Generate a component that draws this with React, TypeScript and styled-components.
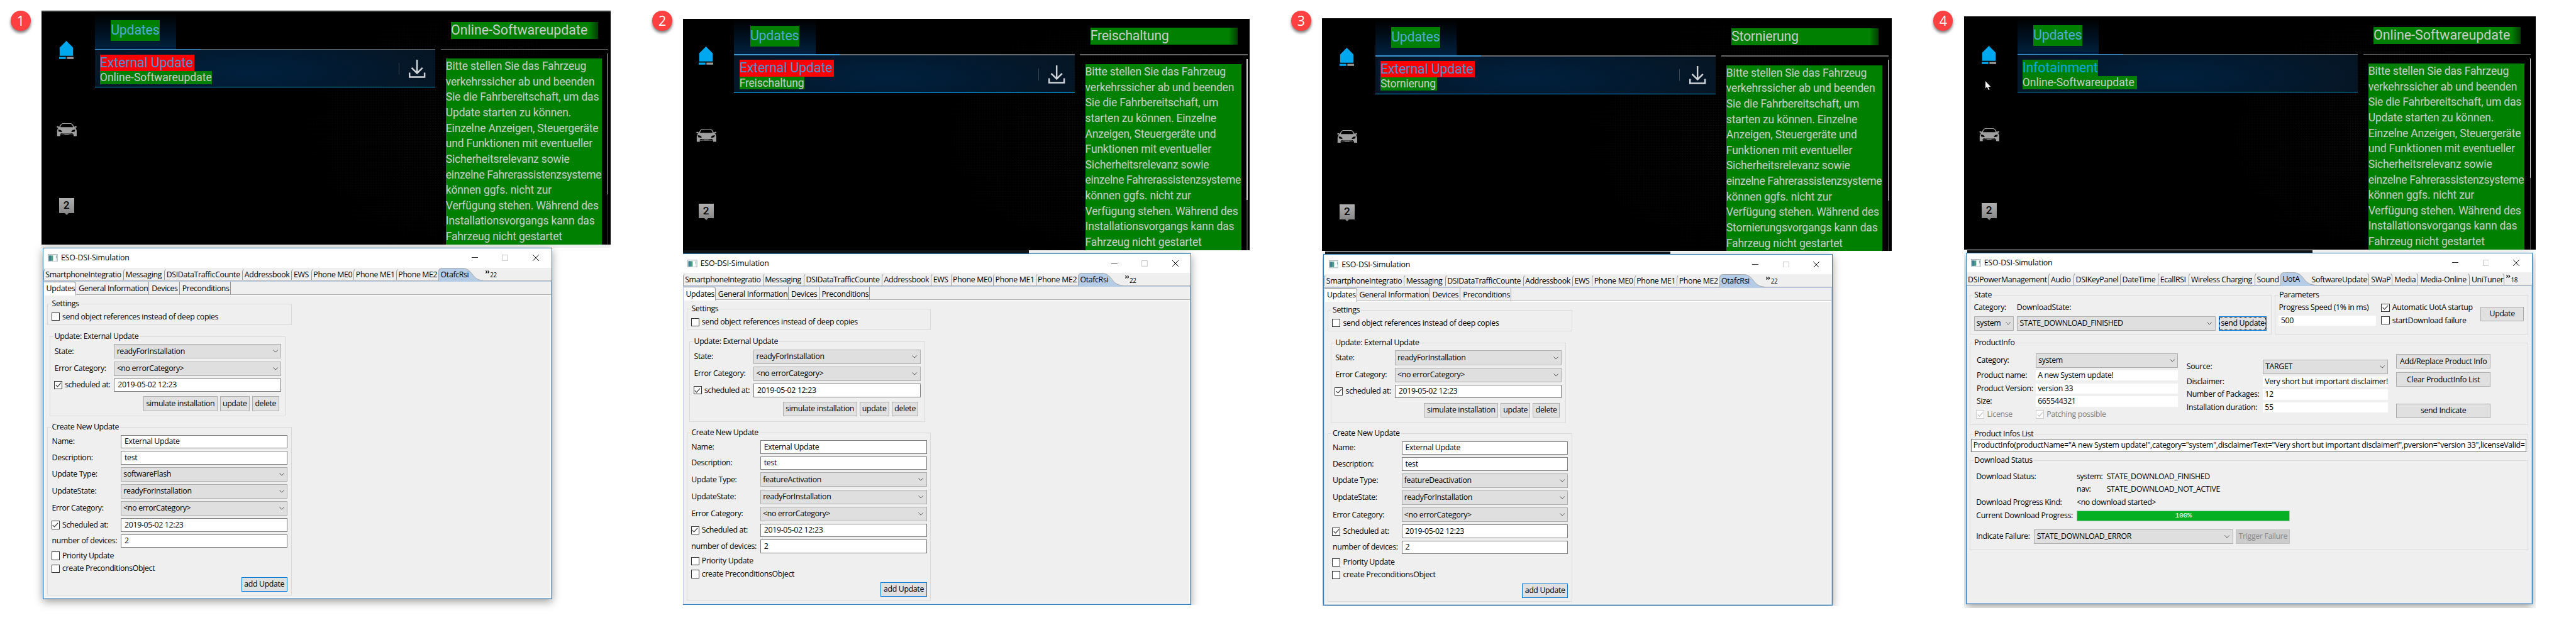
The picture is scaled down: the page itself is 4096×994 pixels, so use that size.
import React from 'react';
import styled, { createGlobalStyle, css } from 'styled-components';

const GlobalStyle = createGlobalStyle`
  html, body { margin: 0; padding: 0; background: #fff; overflow: hidden; }
  * { box-sizing: border-box; }
`;

const uiFont = `'Open Sans', 'Noto Sans', sans-serif`;
const carFont = `Roboto, 'Liberation Sans', sans-serif`;

/* ---------- page ---------- */

const Page = styled.main`
  zoom: 0.82332;
  display: flex;
  align-items: flex-start;
  gap: 81px;
  width: 4975px;
  height: 1206px;
  padding-left: 21px;
  background: #fff;
  overflow: hidden;
`;

const Column = styled.section`
  display: flex;
  align-items: flex-start;
  gap: 21px;
  flex: none;
`;

const Badge = styled.div`
  display: flex;
  align-items: center;
  justify-content: center;
  width: 38px;
  height: 38px;
  margin-top: 21px;
  border-radius: 50%;
  background: #ff4040;
  color: #fff;
  font: 400 26px/38px ${uiFont};
  box-shadow: 0 4px 5px rgba(0, 0, 0, 0.5);
`;

const Capture = styled.div<{ $top: number; $w: number; $h: number; $ruled?: boolean }>`
  width: ${p => p.$w}px;
  height: ${p => p.$h}px;
  margin-top: ${p => p.$top}px;
  overflow: ${p => (p.$ruled ? 'visible' : 'hidden')};
  ${p => p.$ruled && css`border-top: 1px solid #a9b0b0; padding-top: 1px;`}
`;

/* ---------- infotainment screen ---------- */

const Screen = styled.div<{ $h: number; $crop: number }>`
  height: ${p => p.$h}px;
  background: #000;
  overflow: hidden;
  position: relative;
  z-index: 1;
  & > div { margin: ${p => -p.$crop}px 0 0 ${p => -p.$crop}px; }
`;

const ScreenGrid = styled.div`
  position: relative;
  display: grid;
  grid-template-columns: 103px 658px 324px;
  column-gap: 0;
  width: 1110px;
  height: 450px;
  color: #c8ccc8;
  font-family: ${carFont};
`;

const Dots = styled.div`
  position: absolute;
  inset: 0;
  background-image: radial-gradient(circle, #2a2a2a 0.8px, transparent 1.1px);
  background-size: 5px 5px;
  mask-image: radial-gradient(ellipse 340px 260px at 800px 230px, rgba(0,0,0,.7), transparent);
`;

const SideBar = styled.nav`
  position: relative;
  display: flex;
  flex-direction: column;
  align-items: center;
  width: 97px;
  padding-top: 57px;
`;

const CarSlot = styled.div` height: 25px; margin: 124px 0 119px; svg { display: block; } `;

const Bubble = styled.div`
  position: relative;
  width: 29px;
  height: 29px;
  background: linear-gradient(#b0b0b0, #888);
  color: #000;
  font: 500 21px/29px ${carFont};
  text-align: center;
  &::after {
    content: '';
    position: absolute;
    left: 11px;
    top: 29px;
    border: 4px solid transparent;
    border-top-color: #888;
  }
`;

const Pointer = styled.svg` position: absolute; left: 42px; top: 125px; `;

const MainPane = styled.div` position: relative; `;

const TabArea = styled.div` height: 72px; `;

const ActiveTab = styled.div`
  width: 157px;
  height: 72px;
  padding: 17px 0 0 31px;
  background: linear-gradient(#000 5%, #00213f);
`;

const TabLabel = styled.span`
  display: block;
  width: 95px;
  height: 40px;
  background: #008000;
  color: #4fa8d8;
  font-size: 26px;
  line-height: 39px;
  letter-spacing: -0.28px;
  white-space: nowrap;
`;

const Rule = styled.div<{ $accent?: boolean }>`
  height: 2px;
  background: ${p => (p.$accent ? 'linear-gradient(90deg, #3c96d2 204px, #666a6e 204px)' : '#666')};
`;

const Item = styled.div`
  display: flex;
  align-items: flex-start;
  height: 73px;
  padding: 9px 19px 0 10px;
  border-bottom: 2px solid #00a8f0;
  background: radial-gradient(ellipse 70% 130% at 45% 60%, #00203e, #06131f);
`;

const ItemText = styled.div` flex: 1; `;

const ItemName = styled.div<{ $known?: boolean; $w: number }>`
  width: ${p => p.$w}px;
  height: 32px;
  background: ${p => (p.$known ? '#008000' : '#ff0000')};
  color: ${p => (p.$known ? '#00a8e8' : '#4c8fd0')};
  font-size: 26px;
  line-height: 31px;
  letter-spacing: -0.2px;
  white-space: nowrap;
`;

const ItemKind = styled.div<{ $w: number; $ls: number }>`
  width: ${p => p.$w}px;
  height: 25px;
  background: #008000;
  font-size: 21.3px;
  line-height: 25px;
  letter-spacing: ${p => p.$ls}px;
  white-space: nowrap;
`;

const ItemAction = styled.div`
  display: flex;
  gap: 19px;
  padding-top: 10px;
  &::before { content: ''; width: 1px; height: 23px; margin-top: 6px; background: #3a4550; }
`;

const Detail = styled.div` position: relative; margin-left: 10px; width: 324px; `;

const DetailTitle = styled.div<{ $ls: number }>`
  width: 284px;
  height: 33px;
  margin: 20px 0 19px 20px;
  background: linear-gradient(90deg, #008000 94%, #023c02);
  font-size: 26px;
  line-height: 32px;
  letter-spacing: ${p => p.$ls}px;
  white-space: nowrap;
`;

const DetailBody = styled.div` display: flex; height: 376px; `;

const Notice = styled.div`
  width: 302px;
  margin: 17px 10px 0 10px;
  background: #008000;
  font-size: 21.3px;
  line-height: 29.9px;
  letter-spacing: -0.23px;
  white-space: nowrap;
`;

const NoticeLine = styled.div<{ $tight?: boolean }>`
  ${p => p.$tight && css`letter-spacing: -0.42px;`}
`;

const ScrollTrack = styled.div<{ $thumb: number }>`
  width: 2px;
  margin-top: 7px;
  background: linear-gradient(#d8d8d8 ${p => p.$thumb}px, #444 ${p => p.$thumb}px);
`;

/* ---------- desktop behind the window ---------- */

const Strip = styled.div<{ $x: number; $w: number }>`
  width: ${p => p.$w}px;
  height: 5px;
  margin: 1px 0 0 ${p => p.$x}px;
  background: #14171a;
`;

const StripGap = styled.div` height: 6.5px; background: #f0f0f0; `;

/* ---------- simulator window ---------- */

const Frame = styled.div<{ $x: number; $w: number }>`
  position: relative;
  display: flex;
  flex-direction: column;
  width: ${p => p.$w}px;
  height: 679px;
  margin-left: ${p => p.$x}px;
  border: 1px solid #2a7cba;
  background: #efefef;
  color: #000;
  font: 400 15px/20px ${uiFont};
  letter-spacing: -0.41px;
  white-space: nowrap;
  box-shadow: 0 5px 16px rgba(0, 0, 0, 0.38);
`;

const TitleBar = styled.header`
  display: flex;
  align-items: center;
  height: 37px;
  padding: 0 24px 0 9px;
  background: #fff;
  svg { flex: none; }
`;

const Caption = styled.span` flex: 1; margin-left: 6px; padding-top: 1px; letter-spacing: -0.18px; `;

const Controls = styled.div` display: flex; align-items: center; gap: 47px; svg { display: block; } `;

const TabStrip = styled.div`
  display: flex;
  flex: none;
  height: 27px;
  border-bottom: 2px solid #b5cce6;
  box-shadow: inset 0 -1px 0 #989898;
`;

const OuterTab = styled.div<{ $w: number; $side?: 'left' | 'right' | 'none' }>`
  width: ${p => p.$w}px;
  height: 24px;
  flex: none;
  padding-left: ${p => (p.$side === 'right' ? 4 : 3)}px;
  padding-top: 3px;
  border-top: 1px solid transparent;
  ${p => (!p.$side || p.$side === 'left') && css`border-left: 1px solid #989898; border-top-left-radius: 8px;`}
  ${p => p.$side === 'right' && css`border-right: 1px solid #989898; border-top-right-radius: 8px;`}
`;

const Selected = styled.div<{ $w: number }>`
  position: relative;
  width: ${p => p.$w}px;
  flex: none;
  padding: 4px 0 0 4px;
  svg { position: absolute; left: 0; top: 0; }
  span { position: relative; }
`;

const More = styled.div`
  display: flex;
  margin-left: 4px;
  small { font-size: 12px; line-height: 14px; margin: 8px 0 0 1px; }
  svg { margin-top: 5px; }
`;

const Client = styled.div`
  display: flex;
  flex-direction: column;
  flex: 1;
  border: solid #b5cce6;
  border-width: 0 2px 2px;
`;

const InnerTabs = styled.div`
  display: flex;
  height: 27px;
  flex: none;
  border-bottom: 2px solid #fff;
  box-shadow: inset 0 -1px 0 #989898;
`;

const InnerTab = styled.div<{ $w: number; $on?: boolean }>`
  width: ${p => p.$w}px;
  height: ${p => (p.$on ? 27 : 24)}px;
  padding: 4px 0 0 4.5px;
  border-right: 1px solid #989898;
  ${p => p.$on && css`background: #fff; border-top-right-radius: 5px; border-top: 1px solid #989898; padding-top: 3px;`}
`;

const Sheet = styled.div`
  flex: 1;
  padding: 15.8px 0 0 5px;
  border: solid #fff;
  border-width: 0 2px 2px;
`;

const Group = styled.div<{ $w?: number; $h: number; $m?: string; $p?: string }>`
  position: relative;
  width: ${p => (p.$w ? `${p.$w}px` : 'auto')};
  height: ${p => p.$h}px;
  margin: ${p => p.$m ?? '0'};
  padding: ${p => p.$p ?? '0'};
  border: 1px solid #dadada;
`;

const Legend = styled.span`
  position: absolute;
  left: 6px;
  top: -11px;
  padding: 0 2px;
  background: #efefef;
`;

const Form = styled.div<{ $label: number }>`
  display: grid;
  grid-template-columns: ${p => p.$label}px 1fr;
  row-gap: 5px;
  align-items: center;
  & > span { padding-left: 1px; }
`;

const Field = styled.div<{ $w?: number; $flat?: boolean; $ls?: number }>`
  display: flex;
  align-items: center;
  width: ${p => (p.$w ? `${p.$w}px` : 'auto')};
  height: ${p => (p.$flat ? 20 : 26)}px;
  padding-left: ${p => (p.$flat ? 4 : 6)}px;
  border: ${p => (p.$flat ? 'none' : '1px solid #7a7a7a')};
  background: #fff;
  overflow: hidden;
  ${p => p.$ls && css`height: 25px; padding-left: 3px; letter-spacing: ${p.$ls}px;`}
`;

const Combo = styled.div<{ $w?: number }>`
  display: flex;
  align-items: center;
  justify-content: space-between;
  width: ${p => (p.$w ? `${p.$w}px` : 'auto')};
  height: 28px;
  flex: none;
  padding: 0 5px 0 4px;
  border: 1px solid #adadad;
  background: #dfdfdf;
`;

const Button = styled.div<{ $w: number; $look?: 'default' | 'focus' | 'off' }>`
  display: flex;
  align-items: center;
  justify-content: center;
  width: ${p => p.$w}px;
  height: 28px;
  flex: none;
  border: 1px solid #adadad;
  background: #e0e0e0;
  ${p => (p.$look === 'default' || p.$look === 'focus') && css`border: 2px solid #0078d7;`}
  ${p => p.$look === 'focus' && css`outline: 1px dotted #000; outline-offset: -3px;`}
  ${p => p.$look === 'off' && css`border-color: #bfbfbf; background: #ccc; color: #8a8a8a;`}
`;

const CheckRow = styled.div<{ $off?: boolean }>`
  display: flex;
  align-items: center;
  gap: 5px;
  height: 20px;
  color: ${p => (p.$off ? '#7d7d7d' : '#000')};
`;

const Box = styled.span<{ $off?: boolean }>`
  display: flex;
  align-items: center;
  justify-content: center;
  width: 16px;
  height: 16px;
  border: 1px solid ${p => (p.$off ? '#ccc' : '#333')};
  background: #fff;
`;

const Row = styled.div<{ $gap?: number; $m?: string; $end?: boolean }>`
  display: flex;
  align-items: center;
  justify-content: ${p => (p.$end ? 'flex-end' : 'flex-start')};
  gap: ${p => p.$gap ?? 0}px;
  margin: ${p => p.$m ?? '0'};
`;

const Stack = styled.div<{ $gap?: number; $w?: number; $m?: string }>`
  display: flex;
  flex-direction: column;
  gap: ${p => p.$gap ?? 0}px;
  width: ${p => (p.$w ? `${p.$w}px` : 'auto')};
  margin: ${p => p.$m ?? '0'};
  flex: none;
`;

const Cell = styled.span<{ $w: number }>` width: ${p => p.$w}px; flex: none; `;

const UotaBody = styled.div` flex: 1; padding: 16px 5px 0 5px; `;

const TopRow = styled.div` display: flex; gap: 5.5px; `;

const ProductRow = styled.div` display: flex; align-items: flex-start; `;

const Progress = styled.div`
  display: flex;
  align-items: center;
  justify-content: center;
  width: 412px;
  height: 21px;
  border: 1px solid #a9c9a9;
  background: #06b025;
  color: #fff;
  font: 400 14px/18px 'Liberation Mono', monospace;
`;

/* ---------- icons ---------- */

const HomeIcon = () => (
  <svg width="28" height="35" viewBox="0 0 28 35">
    <path d="M14 0 27 13V29H1V13z" fill="#00a8f0" />
    <rect x="0" y="31" width="13" height="4" fill="#00a8f0" />
    <rect x="15" y="31" width="13" height="4" fill="#999" />
  </svg>
);

const CarIcon = () => (
  <svg width="39" height="25" viewBox="0 0 39 25">
    <path
      fill="#a0a0a0"
      fillRule="evenodd"
      d="M11 0h17l3 2 3 5 3-1.5 2 1-1 2h-2.200q3 2.500 3 6V25h-6v-3H7v3H1V14.500q0-3.500 3-6H1.200l-1-2 2-1L5 7l3-5zM12 1.300 9.500 2.500 7 7.500h25L29.500 2.500 27 1.300zM3 12l1 4 5 1 2-1-3-3zM36 12l-1 4-5 1-2-1 3-3zM9 19.500 6 22l2 .5h23l2-.5-3-2.500-3 .5H12z"
    />
    <path d="M15 21.500h9" stroke="#a0a0a0" />
  </svg>
);

const DownloadIcon = () => (
  <svg width="32" height="35" viewBox="0 0 32 35" fill="none" stroke="#d0d4d6" strokeWidth="3">
    <path d="M16 0V26M5.500 15.500 16 26l10.500-10.500" />
    <path d="M1.500 25v8.500h29V25" />
  </svg>
);

const AppIcon = () => (
  <svg width="19" height="15" viewBox="0 0 19 15">
    <rect x=".5" y=".5" width="18" height="14" fill="#e8eef0" stroke="#a0a8ac" />
    <rect x="2" y="3" width="8" height="10" fill="#4a9c82" />
    <rect x="2" y="3" width="4" height="10" fill="#3f7f94" />
    <rect x="11" y="3" width="4" height="10" fill="#fff" />
    <rect x="16" y="3" width="1" height="5" fill="#60a0a0" />
  </svg>
);

const Chevron = () => (
  <svg width="10" height="6" viewBox="0 0 10 6" fill="none" stroke="#444" strokeWidth="1.100">
    <path d="M.5.5 5 5 9.500.5" />
  </svg>
);

const Tick = ({ off }: { off?: boolean }) => (
  <svg width="12" height="10" viewBox="0 0 12 10" fill="none" stroke={off ? '#bbb' : '#333'} strokeWidth="1.400">
    <path d="M.8 5 4.300 8.500 11 1" />
  </svg>
);

const TabShape = ({ w }: { w: number }) => (
  <svg width={w + 1} height="27" viewBox={`0 0 ${w + 1} 27`}>
    <path
      d={`M.5 27V8Q.5.5 8 .5H${w - 42}C${w - 18} 1 ${w - 24} 23 ${w} 24.500V27z`}
      fill="#b5cce6"
    />
    <path
      d={`M.5 25V8Q.5.5 8 .5H${w - 42}C${w - 18} 1 ${w - 24} 23 ${w} 24.500`}
      fill="none"
      stroke="#989898"
    />
  </svg>
);

/* ---------- composed parts ---------- */

const Check = ({ on, off, children }: { on?: boolean; off?: boolean; children: React.ReactNode }) => (
  <CheckRow $off={off}>
    <Box $off={off}>{on && <Tick off={off} />}</Box>
    {children}
  </CheckRow>
);

const Select = ({ w, children }: { w?: number; children: React.ReactNode }) => (
  <Combo $w={w}>
    {children}
    <Chevron />
  </Combo>
);

const WindowTitle = () => (
  <TitleBar>
    <AppIcon />
    <Caption>ESO-DSI-Simulation</Caption>
    <Controls>
      <svg width="12" height="12"><path d="M0 5.500h12" stroke="#000" /></svg>
      <svg width="12" height="12" viewBox="0 0 12 12"><rect x=".7" y=".7" width="10.600" height="10.600" fill="none" stroke="#c4c4c4" strokeWidth="1.200" /></svg>
      <svg width="12" height="12"><path d="M0 0 12 12M12 0 0 12" stroke="#000" strokeWidth="1.200" /></svg>
    </Controls>
  </TitleBar>
);

const MoreTabs = ({ n }: { n: number }) => (
  <More>
    <svg width="8" height="6" fill="none" stroke="#000" strokeWidth="1.400"><path d="M.5.5 3 3 .5 5.500M4.500.5 7 3 4.500 5.500" /></svg>
    <small>{n}</small>
  </More>
);

type ScreenProps = {
  h?: number;
  crop?: number;
  title: string;
  name: string;
  nameW: number;
  kindW: number;
  known?: boolean;
  thumb?: number;
  lines: string[];
};

const CarScreen = ({ h = 450, crop = 0, title, name, nameW, kindW, known, thumb = 272, lines }: ScreenProps) => (
  <Screen $h={h} $crop={crop}>
    <ScreenGrid>
      <Dots />
      <SideBar>
        <HomeIcon />
        <CarSlot><CarIcon /></CarSlot>
        <Bubble>2</Bubble>
        {known && (
          <Pointer width="11" height="17" viewBox="0 0 11 17">
            <path d="M0 0v14l3-3 3 6 2-1-3-5h5z" fill="#fff" />
          </Pointer>
        )}
      </SideBar>
      <MainPane>
        <TabArea>
          <ActiveTab><TabLabel>Updates</TabLabel></ActiveTab>
        </TabArea>
        <Rule $accent />
        <Item>
          <ItemText>
            <ItemName $known={known} $w={nameW}>{name}</ItemName>
            <ItemKind $w={kindW} $ls={title.length > 15 ? 0 : -0.24}>{title}</ItemKind>
          </ItemText>
          {!known && <ItemAction><DownloadIcon /></ItemAction>}
        </Item>
      </MainPane>
      <Detail>
        <DetailTitle $ls={title.length > 15 ? 0 : -0.38}>{title}</DetailTitle>
        <Rule />
        <DetailBody>
          <Notice>
            {lines.map(l => <NoticeLine key={l} $tight={l.endsWith('systeme')}>{l}</NoticeLine>)}
          </Notice>
          <ScrollTrack $thumb={thumb} />
        </DetailBody>
      </Detail>
    </ScreenGrid>
  </Screen>
);

const otaTabs: [string, number][] = [
  ['SmartphoneIntegratio', 154.3],
  ['Messaging', 79.3],
  ['DSIDataTrafficCounte', 150.7],
  ['Addressbook', 95],
  ['EWS', 38.1],
  ['Phone ME0', 82],
  ['Phone ME1', 82],
  ['Phone ME2', 82],
];

const OtaWindow = ({ x, type }: { x: number; type: string }) => (
  <Frame $x={x} $w={983.5}>
    <WindowTitle />
    <TabStrip>
      {otaTabs.map(([t, w]) => <OuterTab key={t} $w={w}>{t}</OuterTab>)}
      <Selected $w={86.5}><TabShape w={86.5} /><span>OtafcRsi</span></Selected>
      <MoreTabs n={22} />
    </TabStrip>
    <Client>
      <InnerTabs>
        <InnerTab $w={62.5} $on>Updates</InnerTab>
        <InnerTab $w={141}>General Information</InnerTab>
        <InnerTab $w={59}>Devices</InnerTab>
        <InnerTab $w={98}>Preconditions</InnerTab>
      </InnerTabs>
      <Sheet>
        <Group $w={472} $h={41} $p="14px 0 0 7px">
          <Legend>Settings</Legend>
          <Check>send object references instead of deep copies</Check>
        </Group>
        <Group $w={455} $h={155} $m="22px 0 0 5px" $p="14px 7px 0 7px">
          <Legend>Update: External Update</Legend>
          <Form $label={116}>
            <span>State:</span>
            <Select>readyForInstallation</Select>
            <span>Error Category:</span>
            <Select>&lt;no errorCategory&gt;</Select>
            <Check on>scheduled at:</Check>
            <Field>2019-05-02 12:23</Field>
          </Form>
          <Row $gap={5} $m="9px 4px 0 0" $end>
            <Button $w={143}>simulate installation</Button>
            <Button $w={57}>update</Button>
            <Button $w={52}>delete</Button>
          </Row>
        </Group>
        <Group $w={472} $h={325} $m="20.5px 0 0 0" $p="14px 7px 0 7px">
          <Legend>Create New Update</Legend>
          <Form $label={134}>
            <span>Name:</span>
            <Field>External Update</Field>
            <span>Description:</span>
            <Field>test</Field>
            <span>Update Type:</span>
            <Select>{type}</Select>
            <span>UpdateState:</span>
            <Select>readyForInstallation</Select>
            <span>Error Category:</span>
            <Select>&lt;no errorCategory&gt;</Select>
            <Check on>Scheduled at:</Check>
            <Field>2019-05-02 12:23</Field>
            <span>number of devices:</span>
            <Field>2</Field>
          </Form>
          <Stack $gap={5} $m="5.5px 0 6px 0">
            <Check>Priority Update</Check>
            <Check>create PreconditionsObject</Check>
          </Stack>
          <Row $end><Button $w={89} $look="default">add Update</Button></Row>
        </Group>
      </Sheet>
    </Client>
  </Frame>
);

const uotaLeft: [string, number][] = [
  ['Audio', 48.2],
  ['DSIKeyPanel', 89.9],
  ['DateTime', 73.1],
  ['EcallRSI', 59.7],
  ['Wireless Charging', 127.1],
  ['Sound', 49.9],
];

const uotaRight: [string, number][] = [
  ['SoftwareUpdate', 115.1],
  ['SWaP', 45],
  ['Media', 50],
  ['Media-Online', 98.9],
  ['UniTuner', 67.1],
];

const UotaWindow = ({ x }: { x: number }) => (
  <Frame $x={x} $w={1094.5}>
    <WindowTitle />
    <TabStrip>
      <OuterTab $w={158.9} $side="none">DSIPowerManagement</OuterTab>
      {uotaLeft.map(([t, w]) => <OuterTab key={t} $w={w}>{t}</OuterTab>)}
      <Selected $w={56}><TabShape w={66} /><span>UotA</span></Selected>
      {uotaRight.map(([t, w]) => <OuterTab key={t} $w={w} $side="right">{t}</OuterTab>)}
      <MoreTabs n={18} />
    </TabStrip>
    <Client>
      <UotaBody>
        <TopRow>
          <Group $w={583.5} $h={77} $p="14px 7px 0 7px">
            <Legend>State</Legend>
            <Row><Cell $w={83}>Category:</Cell><span>DownloadState:</span></Row>
            <Row $gap={6} $m="6px 0 0 0">
              <Select w={77.5}>system</Select>
              <Select w={383}>STATE_DOWNLOAD_FINISHED</Select>
              <Button $w={93.5} $look="focus">send Update</Button>
            </Row>
          </Group>
          <Group $w={490} $h={77} $p="14px 7px 0 7px">
            <Legend>Parameters</Legend>
            <Row>
              <Stack $gap={5} $w={188}>
                <span>Progress Speed (1% in ms)</span>
                <Field $flat>500</Field>
              </Stack>
              <Stack $gap={5} $w={192} $m="0 0 0 10px">
                <Check on>Automatic UotA startup</Check>
                <Check>startDownload failure</Check>
              </Stack>
              <Button $w={83}>Update</Button>
            </Row>
          </Group>
        </TopRow>
        <Group $w={1079} $h={159.5} $m="16px 0 0 0" $p="0 0 0 11.5px">
          <Legend>ProductInfo</Legend>
          <ProductRow>
            <Stack $w={390} $m="19px 0 0 0">
              <Form $label={115}>
                <span>Category:</span>
                <Select>system</Select>
                <span>Product name:</span>
                <Field $flat>A new System update!</Field>
                <span>Product Version:</span>
                <Field $flat>version 33</Field>
                <span>Size:</span>
                <Field $flat>665544321</Field>
                <Check on off>License</Check>
                <Check on off>Patching possible</Check>
              </Form>
            </Stack>
            <Stack $w={390} $m="31px 0 0 15.5px">
              <Form $label={148}>
                <span>Source:</span>
                <Select>TARGET</Select>
                <span>Disclaimer:</span>
                <Field $flat>Very short but important disclaimer!</Field>
                <span>Number of Packages:</span>
                <Field $flat>12</Field>
                <span>Installation duration:</span>
                <Field $flat>55</Field>
              </Form>
            </Stack>
            <Stack $gap={7} $m="21px 0 0 16px">
              <Button $w={182}>Add/Replace Product Info</Button>
              <Button $w={182}>Clear ProductInfo List</Button>
              <Row $m="25px 0 0 0"><Button $w={182}>send Indicate</Button></Row>
            </Stack>
          </ProductRow>
        </Group>
        <Group $w={1079} $h={36} $m="16px 0 0 0" $p="9px 2px 0 2px">
          <Legend>Product Infos List</Legend>
          <Row>
            <Field $w={1073} $ls={-0.37}>
              ProductInfo(productName="A new System update!",category="system",disclaimerText="Very short but important disclaimer!",pversion="version 33",licenseValid=
            </Field>
          </Row>
        </Group>
        <Group $w={1079} $h={173} $m="16px 0 0 0" $p="20px 0 0 11.5px">
          <Legend>Download Status</Legend>
          <Stack $gap={5}>
            <Row><Cell $w={194}>Download Status:</Cell><Cell $w={58}>system:</Cell><span>STATE_DOWNLOAD_FINISHED</span></Row>
            <Row $m="0 0 0 194px"><Cell $w={58}>nav:</Cell><span>STATE_DOWNLOAD_NOT_ACTIVE</span></Row>
            <Row><Cell $w={194}>Download Progress Kind:</Cell><span>&lt;no download started&gt;</span></Row>
            <Row><Cell $w={194}>Current Download Progress:</Cell><Progress>100%</Progress></Row>
          </Stack>
          <Row $m="16px 0 0 0">
            <Cell $w={112}>Indicate Failure:</Cell>
            <Select w={384}>STATE_DOWNLOAD_ERROR</Select>
            <Row $m="0 0 0 6px"><Button $w={104} $look="off">Trigger Failure</Button></Row>
          </Row>
        </Group>
      </UotaBody>
    </Client>
  </Frame>
);

const updateText = [
  'Bitte stellen Sie das Fahrzeug',
  'verkehrssicher ab und beenden',
  'Sie die Fahrbereitschaft, um das',
  'Update starten zu können.',
  'Einzelne Anzeigen, Steuergeräte',
  'und Funktionen mit eventueller',
  'Sicherheitsrelevanz sowie',
  'einzelne Fahrerassistenzsysteme',
  'können ggfs. nicht zur',
  'Verfügung stehen. Während des',
  'Installationsvorgangs kann das',
  'Fahrzeug nicht gestartet',
];

const featureText = (process: string) => [
  'Bitte stellen Sie das Fahrzeug',
  'verkehrssicher ab und beenden',
  'Sie die Fahrbereitschaft, um',
  'starten zu können. Einzelne',
  'Anzeigen, Steuergeräte und',
  'Funktionen mit eventueller',
  'Sicherheitsrelevanz sowie',
  'einzelne Fahrerassistenzsysteme',
  'können ggfs. nicht zur',
  'Verfügung stehen. Während des',
  `${process} kann das`,
  'Fahrzeug nicht gestartet',
];

export default function App() {
  return (
    <>
      <GlobalStyle />
      <Page>
        <Column>
          <Badge>1</Badge>
          <Capture $top={20} $w={1099} $h={1180} $ruled>
            <CarScreen title="Online-Softwareupdate" name="External Update" nameW={182} kindW={216} lines={updateText} />
            <StripGap />
            <OtaWindow x={2.5} type="softwareFlash" />
          </Capture>
        </Column>
        <Column>
          <Badge>2</Badge>
          <Capture $top={37} $w={1094} $h={1132}>
            <CarScreen h={446} crop={4} title="Freischaltung" name="External Update" nameW={182} kindW={126} lines={featureText('Installationsvorgangs')} />
            <Strip $x={0} $w={668} />
            <OtaWindow x={-1.5} type="featureActivation" />
          </Capture>
        </Column>
        <Column>
          <Badge>3</Badge>
          <Capture $top={35} $w={1100} $h={1136}>
            <CarScreen title="Stornierung" name="External Update" nameW={182} kindW={109} lines={featureText('Stornierungsvorgangs')} />
            <Strip $x={6} $w={667} />
            <OtaWindow x={3} type="featureDeactivation" />
          </Capture>
        </Column>
        <Column>
          <Badge>4</Badge>
          <Capture $top={32} $w={1104} $h={1142}>
            <CarScreen title="Online-Softwareupdate" name="Infotainment" nameW={146} kindW={221} known thumb={231} lines={updateText} />
            <Strip $x={6} $w={667} />
            <UotaWindow x={3.5} />
          </Capture>
        </Column>
      </Page>
    </>
  );
}
